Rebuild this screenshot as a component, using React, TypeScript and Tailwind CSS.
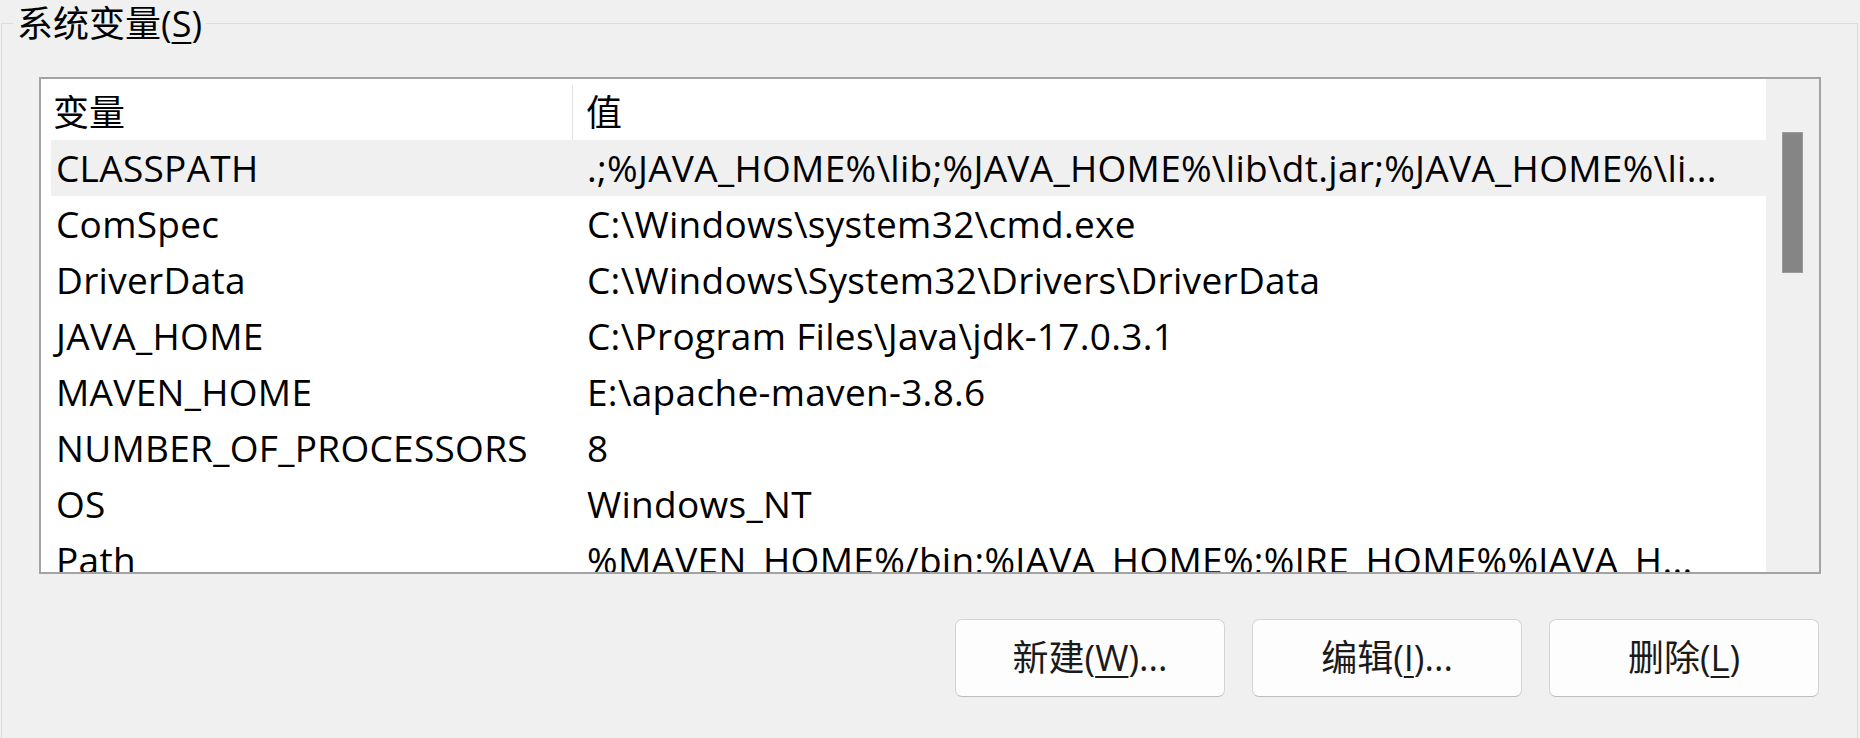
import React from 'react'

const rows = [
  {name: 'CLASSPATH', value: '.;%JAVA_HOME%\\lib;%JAVA_HOME%\\lib\\dt.jar;%JAVA_HOME%\\li...', selected: true},
  {name: 'ComSpec', value: 'C:\\Windows\\system32\\cmd.exe'},
  {name: 'DriverData', value: 'C:\\Windows\\System32\\Drivers\\DriverData'},
  {name: 'JAVA_HOME', value: 'C:\\Program Files\\Java\\jdk-17.0.3.1'},
  {name: 'MAVEN_HOME', value: 'E:\\apache-maven-3.8.6'},
  {name: 'NUMBER_OF_PROCESSORS', value: '8'},
  {name: 'OS', value: 'Windows_NT'},
  {name: 'Path', value: '%MAVEN_HOME%/bin;%JAVA_HOME%;%JRE_HOME%%JAVA_H...'},
]

function Key({children}: {children: React.ReactNode}) {
  return <span className="underline decoration-[2px] underline-offset-[5px]">{children}</span>
}

function Button({children}: {children: React.ReactNode}) {
  return (
    <button className="flex h-[78px] w-[270px] items-center justify-center rounded-[7px] border border-[#d3d3d3] border-b-[#bcbcbc] bg-[#fdfdfd] text-[#1a1a1a]">
      {children}
    </button>
  )
}

export default function App() {
  return (
    <div className="h-[738px] w-[1860px] overflow-hidden bg-[#f0f0f0] pt-[23px] font-['Open_Sans','Noto_Sans_CJK_SC',sans-serif] text-[36px] leading-[48px] text-black">
      <div className="relative ml-[1px] mr-[2px] h-[800px] border-l border-r border-t border-[#dcdcdc] pl-[37px] pr-[36px] pt-[53px]">
        <div className="absolute left-[11px] top-[-20px] bg-[#f0f0f0] px-[4px] leading-[40px]">
          系统变量(<Key>S</Key>)
        </div>

        {/* list view */}
        <div className="flex h-[497px] border-2 border-[#a3a3a3] bg-white">
          <div className="flex min-w-0 flex-1 flex-col overflow-hidden">
            <div className="flex h-[61px] shrink-0 pt-[6px]">
              <div className="flex w-[532px] items-center border-r border-[#e5e5e5] pl-[12px]">变量</div>
              <div className="flex items-center pl-[13px]">值</div>
            </div>
            <div className="ml-[10px] text-[37px] tracking-[0.3px]">
              {rows.map(r => (
                <div key={r.name} className={`flex h-[56px] items-center whitespace-nowrap ${r.selected ? 'bg-[#f0f0f0]' : ''}`}>
                  <div className="w-[522px] shrink-0 pl-[5px]">{r.name}</div>
                  <div className="pl-[14px]">{r.value}</div>
                </div>
              ))}
            </div>
          </div>
          <div className="w-[53px] shrink-0 bg-[#f0f0f0] pt-[53px]">
            <div className="ml-[16px] h-[141px] w-[21px] border border-[#9a9a9a] bg-[#858585]" />
          </div>
        </div>

        <div className="mt-[45px] flex justify-end gap-[27px] pr-[2px]">
          <Button>新建(<Key>W</Key>)...</Button>
          <Button>编辑(<Key>I</Key>)...</Button>
          <Button>删除(<Key>L</Key>)</Button>
        </div>
      </div>
    </div>
  )
}
